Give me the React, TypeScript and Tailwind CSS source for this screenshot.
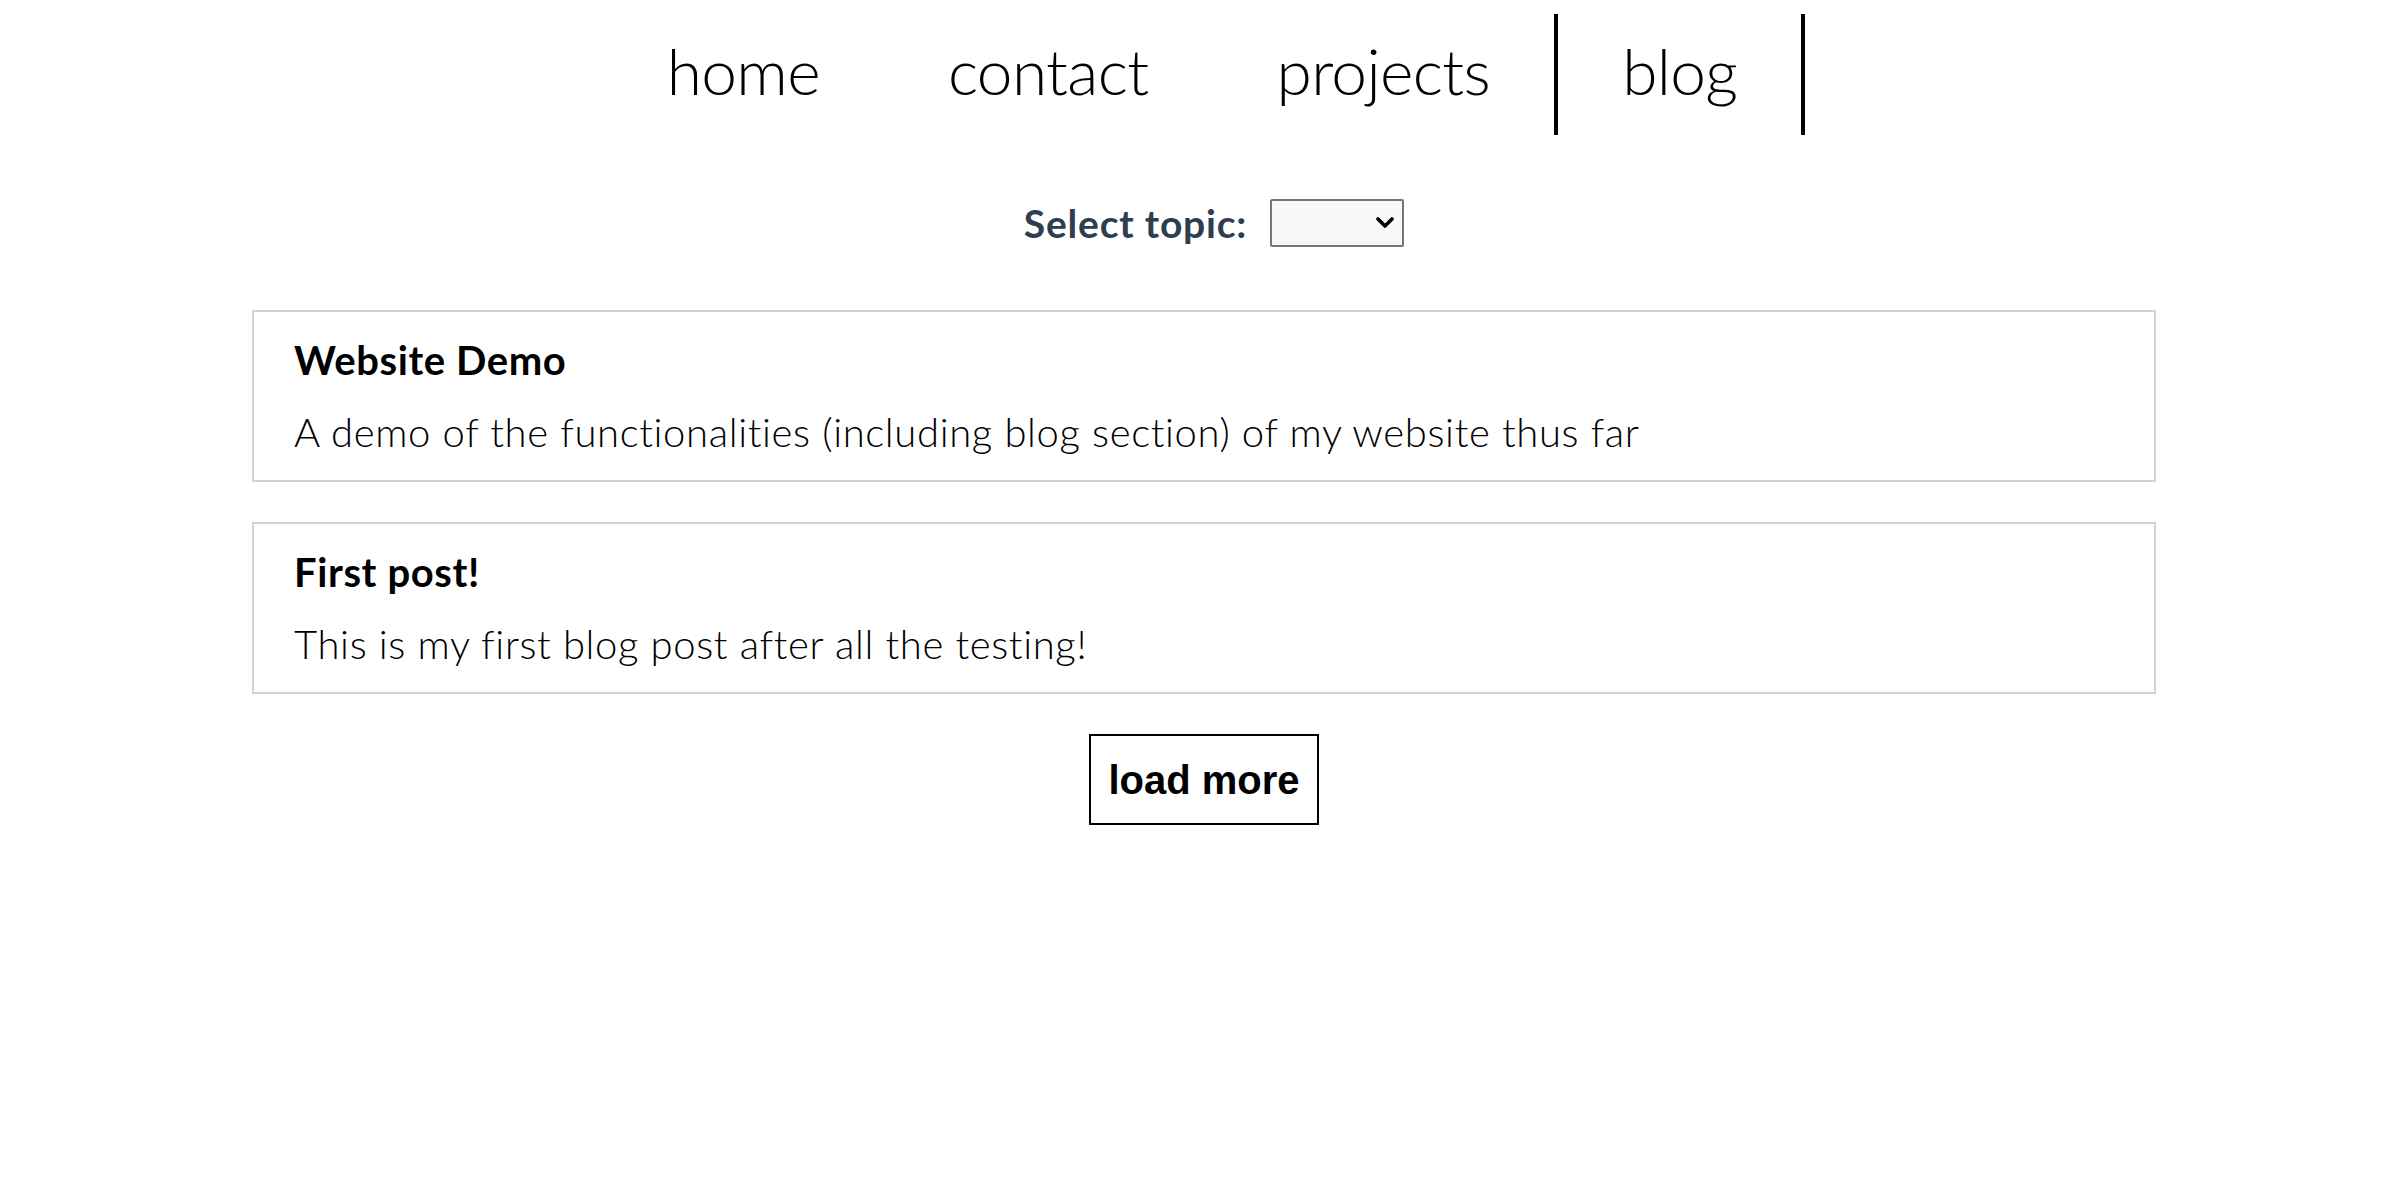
import React from "react";

const navItems = [
  { label: "home", active: false },
  { label: "contact", active: false },
  { label: "projects", active: false },
  { label: "blog", active: true },
];

const posts = [
  {
    title: "Website Demo",
    body: "A demo of the functionalities (including blog section) of my website thus far",
  },
  {
    title: "First post!",
    body: "This is my first blog post after all the testing!",
  },
];

export default function App() {
  return (
    <div className="min-h-screen w-full bg-white text-center font-['Lato','Open_Sans',sans-serif] text-[#2c3e50]">
      <nav className="flex justify-center pt-[14px]">
        {navItems.map((item) => (
          <a
            key={item.label}
            href="#"
            className={
              item.active
                ? "block h-[121px] border-x-4 border-black px-[64px] pt-[9px] text-[64px] font-light leading-normal tracking-[-0.01em] text-black"
                : "block h-[121px] px-[64px] pt-[9px] text-[64px] font-light leading-normal tracking-[-0.01em] text-black"
            }
          >
            {item.label}
          </a>
        ))}
      </nav>

      <div className="mt-[64px] flex h-[48px] items-center justify-center pl-[20px]">
        <label className="text-[39px] font-bold leading-[48px] tracking-[0.02em] text-[#2c3e50]">Select topic:</label>
        <div className="relative ml-[23px] h-[48px] w-[134px]">
          <select className="h-full w-full appearance-none rounded-[2px] border-2 border-[#767676] bg-[#f8f8f8] text-[28px] text-black outline-none">
            <option value=""></option>
          </select>
          <svg
            className="pointer-events-none absolute right-[10px] top-[18px]"
            width="18"
            height="12"
            viewBox="0 0 18 12"
            fill="none"
          >
            <path d="M2 2 L9 9 L16 2" stroke="black" strokeWidth="3.6" strokeLinecap="round" strokeLinejoin="round" />
          </svg>
        </div>
      </div>

      <div className="mx-[252px] mt-[63px] flex flex-col gap-[40px]">
        {posts.map((post) => (
          <div key={post.title} className="border-2 border-[#d3d3d3] px-[40px] py-[24px] text-left text-black">
            <h3 className="text-[40px] font-bold leading-[48px] tracking-[0.015em]">{post.title}</h3>
            <p className="mt-[24px] text-[40px] font-light leading-[48px] tracking-[0.016em]">{post.body}</p>
          </div>
        ))}
      </div>

      <div className="mt-[40px] flex justify-center">
        <button className="h-[91px] border-2 border-black bg-white px-[17px] font-['Liberation_Sans',Arial,sans-serif] text-[40px] font-bold leading-normal text-black">
          load more
        </button>
      </div>
    </div>
  );
}
